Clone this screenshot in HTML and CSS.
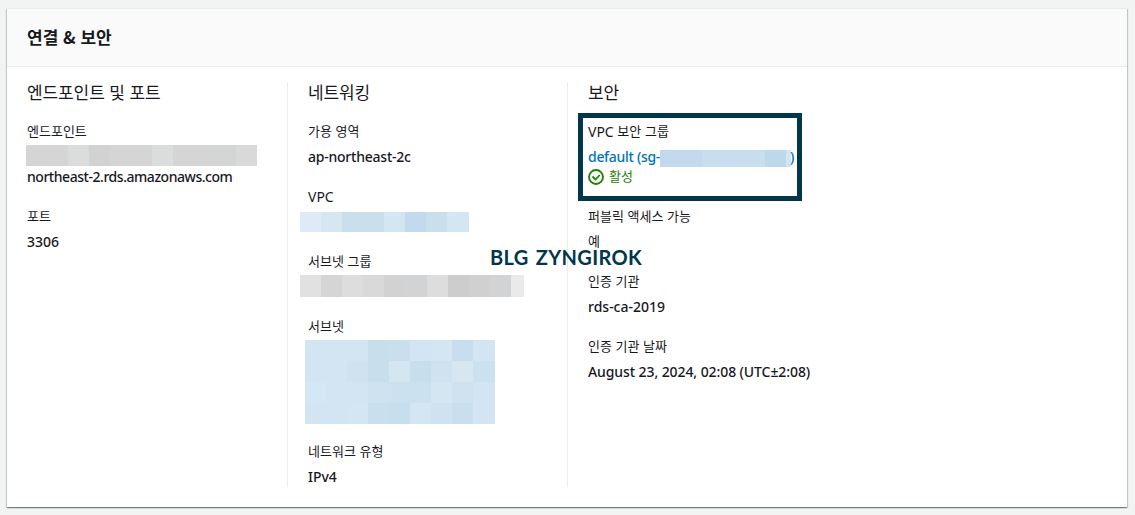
FILE: index.html
```html
<!DOCTYPE html>
<html lang="ko">
<head>
    <meta charset="UTF-8">
    <meta name="viewport" content="width=device-width, initial-scale=1.0">
    <title>연결 &amp; 보안</title>
    <link rel="stylesheet" href="styles.css">
</head>
<body>

    <section class="card">
        <header class="card-header">
            <h2>연결 &amp; 보안</h2>
        </header>

        <div class="columns">
            <div class="column">
                <h3>엔드포인트 및 포트</h3>
                <dl>
                    <dt>엔드포인트</dt>
                    <dd>
                        <div class="mosaic mosaic-endpoint">
                            <i class="g3"></i><i class="g3"></i><i class="g5"></i><i class="g2"></i><i class="g3"></i><i class="g3"></i><i class="g5"></i><i class="g3"></i><i class="g3"></i><i class="g2c"></i><i class="g4"></i>
                        </div>
                        <span class="endpoint">northeast-2.rds.amazonaws.com</span>
                    </dd>
                    <dt>포트</dt>
                    <dd><span class="port">3306</span></dd>
                </dl>
            </div>

            <div class="column">
                <h3>네트워킹</h3>
                <dl>
                    <dt>가용 영역</dt>
                    <dd><span class="zone">ap-northeast-2c</span></dd>
                    <dt><span class="latin">VPC</span></dt>
                    <dd>
                        <div class="mosaic mosaic-vpc">
                            <i class="b7"></i><i class="b6"></i><i class="b2"></i><i class="b2"></i><i class="b5"></i><i class="b0"></i><i class="b2"></i><i class="b5"></i>
                        </div>
                    </dd>
                    <dt>서브넷 그룹</dt>
                    <dd>
                        <div class="mosaic mosaic-group">
                            <i class="g6"></i><i class="g3"></i><i class="g5b"></i><i class="g4"></i><i class="g2"></i><i class="g1c"></i><i class="g5b"></i><i class="g0"></i><i class="g1"></i><i class="g1c"></i><i class="g7"></i>
                        </div>
                    </dd>
                    <dt>서브넷</dt>
                    <dd>
                        <div class="mosaic mosaic-subnets">
                            <i class="b4"></i><i class="b4"></i><i class="b4"></i><i class="b1"></i><i class="b2"></i><i class="b4"></i><i class="b5"></i><i class="b0b"></i><i class="b4"></i>
                            <i class="b4"></i><i class="b4"></i><i class="b3"></i><i class="b1"></i><i class="b5"></i><i class="b1"></i><i class="b3"></i><i class="b6"></i><i class="b2b"></i>
                            <i class="b5b"></i><i class="b4"></i><i class="b4"></i><i class="b3"></i><i class="b2b"></i><i class="b2b"></i><i class="b5"></i><i class="b3"></i><i class="b4"></i>
                            <i class="b4"></i><i class="b4"></i><i class="b5"></i><i class="b2"></i><i class="b1"></i><i class="b5"></i><i class="b3"></i><i class="b2"></i><i class="b4"></i>
                        </div>
                    </dd>
                    <dt>네트워크 유형</dt>
                    <dd><span class="ip">IPv4</span></dd>
                </dl>
            </div>

            <div class="column">
                <h3>보안</h3>
                <dl class="highlight">
                    <dt><span class="latin">VPC</span> 보안 그룹</dt>
                    <dd>
                        <a class="link"><span class="sg">default (sg-</span><span class="mosaic mosaic-sg"><i class="b0"></i><i class="b0"></i><i class="b2c"></i><i class="b0b"></i><i class="b2c"></i><i class="b1b"></i><i class="b4"></i></span><span class="paren">)</span></a>
                        <div class="status">
                            <svg width="16" height="16" viewBox="0 0 16 16" fill="none" stroke="#1d8102" stroke-width="1.8">
                                <circle cx="8" cy="8" r="7"/>
                                <path d="M4.5 7.5l3 3 4.2-4.5"/>
                            </svg>
                            <span class="status-text">활성</span>
                        </div>
                    </dd>
                </dl>
                <dl>
                    <dt>퍼블릭 액세스 가능</dt>
                    <dd class="korean">예</dd>
                    <dt>인증 기관</dt>
                    <dd><span class="ca">rds-ca-2019</span></dd>
                    <dt>인증 기관 날짜</dt>
                    <dd><span class="date">August 23, 2024, 02:08 (UTC±2:08)</span></dd>
                </dl>
            </div>
        </div>
    </section>

    <div class="watermark">BLG ZYNGIROK</div>

</body>
</html>
```
FILE: styles.css
```css
* {
    box-sizing: border-box;
}

body {
    margin: 0;
    height: 515px;
    padding: 8px 8px 8px 7px;
    background: #f2f3f3;
    color: #16191f;
    font-family: "Noto Sans", "Noto Sans CJK KR", sans-serif;
    font-size: 14px;
    line-height: 20px;
    overflow: hidden;
}

.card {
    height: 499px;
    background: #fff;
    box-shadow: 0 1px 1px 0 rgba(0, 28, 36, 0.35), 1px 1px 1px 0 rgba(0, 28, 36, 0.15), -1px 1px 1px 0 rgba(0, 28, 36, 0.15);
}

.card-header {
    height: 59px;
    padding: 18px 20px;
    background: #fafafa;
    border-top: 1px solid #eaeded;
    border-bottom: 1px solid #eaeded;
}

h2, h3, dl, dt, dd {
    margin: 0;
    font-family: "Noto Sans CJK KR", sans-serif;
}

h2 {
    font-size: 17px;
    font-weight: 700;
    line-height: 20px;
}

.columns {
    display: grid;
    grid-template-columns: repeat(4, 280px);
    padding: 15px 0 20px;
}

.column {
    height: 405px;
    padding: 0 20px;
}

.column + .column {
    border-left: 1px solid #eaeded;
}

h3 {
    height: 20px;
    margin-bottom: 20px;
    font-size: 17px;
    font-weight: 400;
    line-height: 20px;
    letter-spacing: -0.1px;
}

dt {
    height: 20px;
    margin-bottom: 5px;
    font-size: 13px;
    line-height: 18px;
}

dd {
    margin-bottom: 20px;
    min-height: 20px;
    font-family: "Noto Sans", "Noto Sans CJK KR", sans-serif;
    font-size: 14px;
    font-weight: 500;
    white-space: nowrap;
}

dd.korean {
    height: 20px;
    font-size: 13px;
    font-weight: 400;
    line-height: 18px;
}

.latin {
    font-family: "Noto Sans", sans-serif;
    font-size: 14px;
    vertical-align: -1px;
}

.endpoint {
    letter-spacing: -0.46px;
}

.zone {
    letter-spacing: -0.23px;
}

.date {
    letter-spacing: -0.09px;
}

/* security group box */
.highlight {
    width: 224px;
    height: 88px;
    margin: -9px 0 6px -10px;
    padding: 4px 5px;
    border: 5px solid #00374a;
}

.link {
    display: flex;
    height: 20px;
    color: #0073bb;
}

.link span {
    flex-shrink: 0;
}

.sg {
    width: 72px;
    letter-spacing: -0.3px;
}

.paren {
    margin-left: -1px;
}

.status {
    display: flex;
    align-items: center;
    gap: 5px;
    height: 20px;
    color: #1d8102;
    font-size: 13px;
    font-weight: 400;
}

.status-text {
    height: 20px;
    line-height: 18px;
}

/* pixelated values */
.mosaic {
    display: grid;
    overflow: hidden;
}

.mosaic-endpoint {
    width: 231px;
    height: 21px;
    margin: -2px 0 1px -1px;
    grid-template-columns: repeat(11, 21px);
}

.mosaic-vpc {
    width: 169px;
    height: 20px;
    margin-left: -8px;
    grid-template-columns: repeat(7, 21px) 22px;
}

.mosaic-group {
    width: 224px;
    height: 22px;
    margin: -2px 0 0 -8px;
    grid-template-columns: repeat(10, 21.1px) 13px;
}

.mosaic-subnets {
    width: 190px;
    height: 84px;
    margin: -2px 0 -2px -3px;
    grid-template-columns: repeat(8, 21px) 22px;
    grid-auto-rows: 21px;
}

.mosaic-sg {
    width: 131px;
    height: 17px;
    margin: 3px 0 0;
    grid-template-columns: repeat(6, 21px) 5px;
}

.g0 { background: #cdcdcd; }
.g1 { background: #d0d0d0; }
.g1c { background: #d1d3d5; }
.g2 { background: #d2d2d2; }
.g2c { background: #d3d6d5; }
.g3 { background: #d5d5d5; }
.g4 { background: #d9d9d9; }
.g5 { background: #dadddc; }
.g5b { background: #dddddd; }
.g6 { background: #e1e1e1; }
.g7 { background: #eaeaea; }

.b0 { background: #c3daee; }
.b0b { background: #c8def0; }
.b1 { background: #c7dfec; }
.b1b { background: #bcd8eb; }
.b2 { background: #c9dfed; }
.b2b { background: #cbe1f0; }
.b2c { background: #c6deee; }
.b3 { background: #cfe2f0; }
.b4 { background: #d3e5f3; }
.b5 { background: #d3e6f1; }
.b5b { background: #d4e8f4; }
.b6 { background: #d7e7f1; }
.b7 { background: #deebf6; }

.watermark {
    position: absolute;
    left: 490px;
    top: 244px;
    color: #00374a;
    font-family: Lato, sans-serif;
    font-size: 20px;
    font-weight: 700;
    line-height: 26px;
    letter-spacing: 0.35px;
    word-spacing: 2px;
    white-space: nowrap;
}
```
